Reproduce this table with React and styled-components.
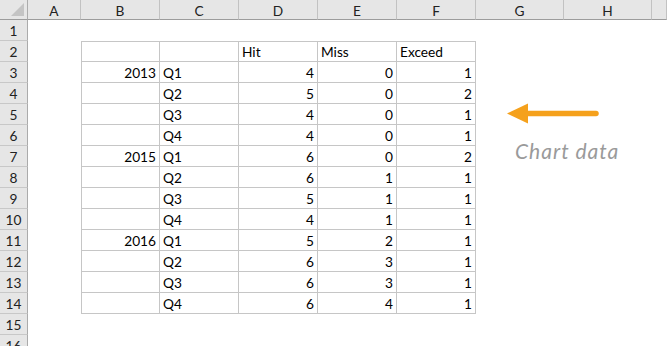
import React from 'react';
import styled, { createGlobalStyle } from 'styled-components';

const GlobalStyle = createGlobalStyle`
  html, body {
    margin: 0;
    padding: 0;
    background: #ffffff;
  }
  body {
    font-family: Lato, "Liberation Sans", sans-serif;
    overflow: hidden;
  }
`;

const COLS = ['A', 'B', 'C', 'D', 'E', 'F', 'G', 'H', ''];
const ROW_COUNT = 16;

const Sheet = styled.div`
  position: relative;
  width: 667px;
  height: 346px;
  overflow: hidden;
  display: grid;
  grid-template-columns: 28px 53px 79px 79px 79px 79px 79px 88px 88px 1fr;
  grid-template-rows: 20px repeat(${ROW_COUNT}, 21px);
  font-size: 13.7px;
  color: #000;
`;

const Corner = styled.div`
  position: relative;
  background: #e6e6e6;
  border-right: 1px solid #ababab;
  border-bottom: 1px solid #9c9c9c;
  box-sizing: border-box;

  &::after {
    content: '';
    position: absolute;
    right: 3px;
    bottom: 3px;
    border-style: solid;
    border-width: 0 0 13px 13px;
    border-color: transparent transparent #c4c4c4 transparent;
  }
`;

const ColHeader = styled.div`
  background: #e6e6e6;
  border-right: 1px solid #c2c2c2;
  border-bottom: 1px solid #9c9c9c;
  box-sizing: border-box;
  display: flex;
  align-items: center;
  justify-content: center;
  color: #222;
  padding-top: 1px;
`;

const RowHeader = styled.div`
  background: #e6e6e6;
  border-right: 1px solid #ababab;
  border-bottom: 1px solid #c8c8c8;
  box-sizing: border-box;
  display: flex;
  align-items: center;
  justify-content: center;
  color: #222;
`;

const Cell = styled.div`
  box-sizing: border-box;
  display: flex;
  align-items: flex-end;
  justify-content: ${p => (p.$right ? 'flex-end' : 'flex-start')};
  padding: 0 3px 1px 3px;
  white-space: nowrap;
  border-right: ${p => (p.$table ? '1px solid #c6c6c6' : 'none')};
  border-bottom: ${p => (p.$table ? '1px solid #c6c6c6' : 'none')};
  border-top: ${p => (p.$top ? '1px solid #c6c6c6' : 'none')};
  border-left: ${p => (p.$left ? '1px solid #c6c6c6' : 'none')};
`;

const Arrow = styled.svg`
  position: absolute;
  left: 505px;
  top: 102px;
`;

const Note = styled.div`
  position: absolute;
  left: 515px;
  top: 138px;
  font-family: Lato, "DejaVu Sans", sans-serif;
  font-style: italic;
  font-size: 21px;
  letter-spacing: 1px;
  color: #9a9a9a;
`;

const data = [
  ['2013', 'Q1', 4, 0, 1],
  ['', 'Q2', 5, 0, 2],
  ['', 'Q3', 4, 0, 1],
  ['', 'Q4', 4, 0, 1],
  ['2015', 'Q1', 6, 0, 2],
  ['', 'Q2', 6, 1, 1],
  ['', 'Q3', 5, 1, 1],
  ['', 'Q4', 4, 1, 1],
  ['2016', 'Q1', 5, 2, 1],
  ['', 'Q2', 6, 3, 1],
  ['', 'Q3', 6, 3, 1],
  ['', 'Q4', 6, 4, 1],
];

const header = ['', '', 'Hit', 'Miss', 'Exceed'];

// value for a sheet cell at (row, col index), col 0 = A
const cellAt = (row, col) => {
  if (col < 1 || col > 5) return null;
  if (row === 2) return { text: header[col - 1], right: false };
  if (row >= 3 && row <= 14) {
    const v = data[row - 3][col - 1];
    return { text: String(v), right: col !== 2 };
  }
  return null;
};

const App = () => {
  const rows = [];
  for (let r = 1; r <= ROW_COUNT; r++) {
    const cells = [<RowHeader key={`h${r}`}>{r}</RowHeader>];
    COLS.forEach((_, c) => {
      const v = cellAt(r, c);
      const inTable = v !== null;
      cells.push(
        <Cell
          key={`${r}-${c}`}
          $table={inTable}
          $top={inTable && r === 2}
          $left={inTable && c === 1}
          $right={v ? v.right : false}
        >
          {v ? v.text : ''}
        </Cell>
      );
    });
    rows.push(cells);
  }

  return (
    <>
      <GlobalStyle />
      <Sheet>
        <Corner />
        {COLS.map((c, i) => (
          <ColHeader key={i}>{c}</ColHeader>
        ))}
        {rows}
        <Arrow width="96" height="24" viewBox="0 0 96 24">
          <polygon points="2,11.5 23,1.5 23,21.5" fill="#f5a11c" />
          <line x1="20" y1="11.5" x2="91" y2="11.5" stroke="#f5a11c" strokeWidth="5.5" strokeLinecap="round" />
        </Arrow>
        <Note>Chart data</Note>
      </Sheet>
    </>
  );
};

export default App;
